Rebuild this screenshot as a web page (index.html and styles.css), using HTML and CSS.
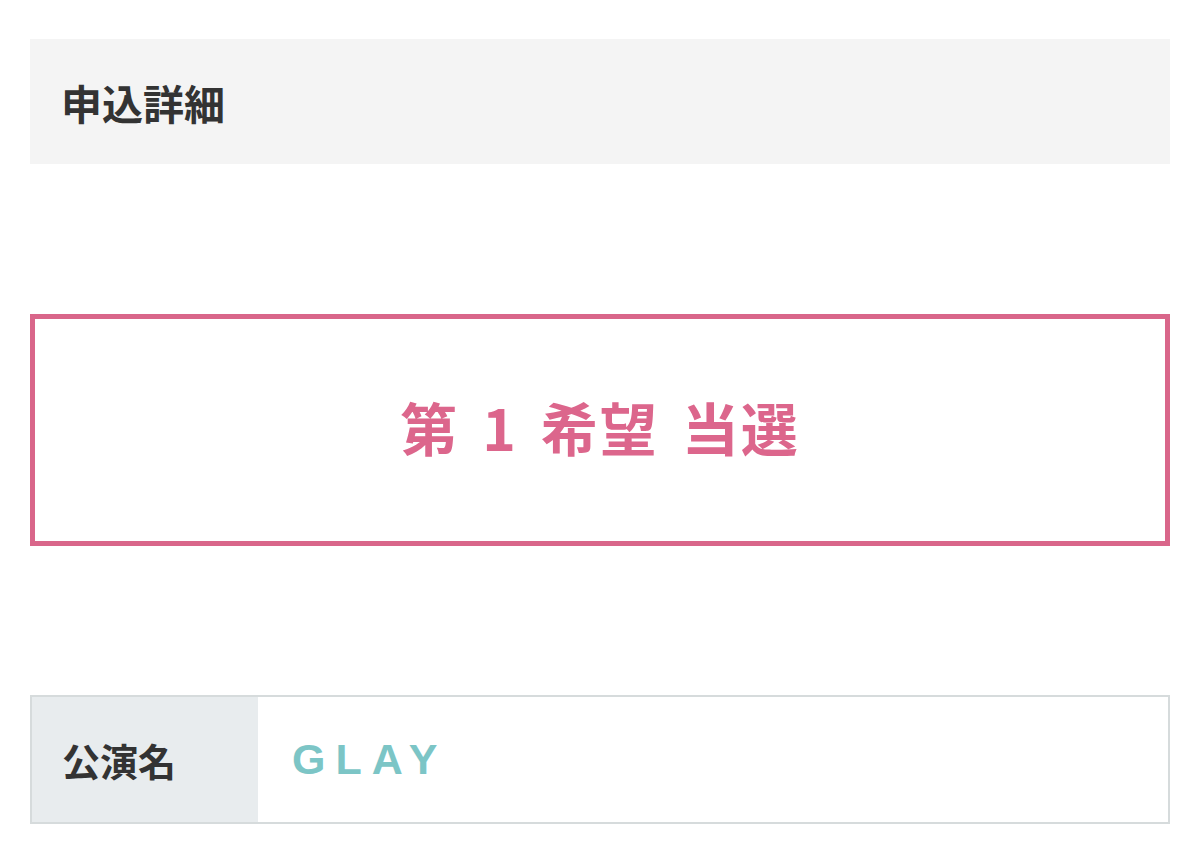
FILE: index.html
```html
<!DOCTYPE html>
<html lang="ja">
<head>
<meta charset="utf-8">
<title>申込詳細</title>
<link rel="stylesheet" href="styles.css">
</head>
<body>
<div class="page">
  <div class="section-head">申込詳細</div>
  <div class="result-box">
    <span class="result-text">第 1 希望 当選</span>
  </div>
  <div class="detail-table">
    <div class="detail-label">公演名</div>
    <div class="detail-value">GLAY</div>
  </div>
</div>
</body>
</html>
```

FILE: styles.css
```css
html, body {
  margin: 0;
  padding: 0;
  background: #ffffff;
}
body {
  font-family: "Noto Sans CJK JP", "Noto Sans", sans-serif;
  color: #333333;
}
.page {
  padding: 39px 30px 0 30px;
  display: flex;
  flex-direction: column;
}
.section-head {
  height: 125px;
  background: #f4f4f4;
  display: flex;
  align-items: center;
  padding-left: 31px;
  font-size: 41px;
  font-weight: 700;
  color: #333333;
  box-sizing: border-box;
}
.result-box {
  margin-top: 150px;
  height: 232px;
  border: 5px solid #d9668a;
  box-sizing: border-box;
  display: flex;
  align-items: center;
  justify-content: center;
}
.result-text {
  font-size: 57px;
  font-weight: 700;
  color: #dc668c;
  letter-spacing: 2px;
  word-spacing: 8px;
  padding-bottom: 8px;
}
.detail-table {
  margin-top: 149px;
  height: 129px;
  border: 2px solid #d6dbdc;
  box-sizing: border-box;
  display: flex;
}
.detail-label {
  width: 226px;
  background: #e8ecee;
  display: flex;
  align-items: center;
  padding-left: 30px;
  box-sizing: border-box;
  font-size: 38px;
  font-weight: 700;
  color: #333333;
}
.detail-value {
  flex: 1;
  display: flex;
  align-items: center;
  padding-left: 34px;
  font-family: "Liberation Sans", Arial, sans-serif;
  font-size: 43px;
  font-weight: 700;
  letter-spacing: 10px;
  color: #7cc5c6;
}
```
